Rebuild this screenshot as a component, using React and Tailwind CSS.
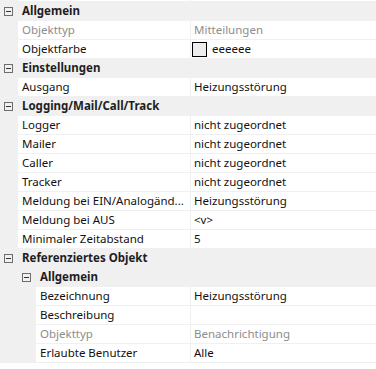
import React from "react";

const rows = [
    {type: "cat", level: 0, label: "Allgemein"},
    {type: "prop", level: 1, label: "Objekttyp", value: "Mitteilungen", readOnly: true},
    {type: "prop", level: 1, label: "Objektfarbe", value: "eeeeee", color: "#eeeeee"},
    {type: "cat", level: 0, label: "Einstellungen"},
    {type: "prop", level: 1, label: "Ausgang", value: "Heizungsstörung"},
    {type: "cat", level: 0, label: "Logging/Mail/Call/Track"},
    {type: "prop", level: 1, label: "Logger", value: "nicht zugeordnet"},
    {type: "prop", level: 1, label: "Mailer", value: "nicht zugeordnet"},
    {type: "prop", level: 1, label: "Caller", value: "nicht zugeordnet"},
    {type: "prop", level: 1, label: "Tracker", value: "nicht zugeordnet"},
    {type: "prop", level: 1, label: "Meldung bei EIN/Analogänd...", value: "Heizungsstörung"},
    {type: "prop", level: 1, label: "Meldung bei AUS", value: "<v>"},
    {type: "prop", level: 1, label: "Minimaler Zeitabstand", value: "5"},
    {type: "cat", level: 0, label: "Referenziertes Objekt"},
    {type: "cat", level: 1, label: "Allgemein"},
    {type: "prop", level: 2, label: "Bezeichnung", value: "Heizungsstörung"},
    {type: "prop", level: 2, label: "Beschreibung", value: ""},
    {type: "prop", level: 2, label: "Objekttyp", value: "Benachrichtigung", readOnly: true},
    {type: "prop", level: 2, label: "Erlaubte Benutzer", value: "Alle"},
];

const gutter = ["w-0", "w-[18px]", "w-[36px]"];
const catPad = ["pl-[4px]", "pl-[22px]"];

const MinusBox = () => (
    <span className="w-[9px] h-[9px] border border-[#6d6d6d] flex items-center justify-center shrink-0">
        <span className="w-[5px] h-px bg-[#333]" />
    </span>
);

const CategoryRow = ({row}) => (
    <div className={`h-[19px] flex items-start ${catPad[row.level]}`}>
        <div className="h-[18px] flex items-center">
            <MinusBox />
            <span className="ml-[9px] font-bold text-[#1e1e1e] leading-none">{row.label}</span>
        </div>
    </div>
);

const PropertyRow = ({row}) => (
    <div className="h-[19px] flex items-start">
        <div className={`${gutter[row.level]} shrink-0`} />
        <div
            className={`h-[18px] flex-1 bg-white flex items-center pl-[4px] whitespace-nowrap overflow-hidden ${
                row.readOnly ? "text-[#8d8d8d]" : "text-[#111]"
            }`}
        >
            {row.label}
        </div>
        <div
            className={`h-[18px] w-[185px] ml-px bg-white flex items-center whitespace-nowrap overflow-hidden ${
                row.readOnly ? "text-[#8d8d8d]" : "text-[#111]"
            } ${row.color ? "pl-px" : "pl-[3px]"}`}
        >
            {row.color && (
                <span
                    className="w-[15px] h-[15px] border border-black mr-[5px] shrink-0"
                    style={{backgroundColor: row.color}}
                />
            )}
            {row.value}
        </div>
    </div>
);

const App = () => {
    return (
        <div className="w-[376px] h-[369px] bg-white text-[11.5px]" style={{fontFamily: '"Noto Sans", sans-serif'}}>
            <div className="bg-[#f0f0f0]">
                {/* cut-off row above */}
                <div className="h-[2px] flex items-start">
                    <div className="w-[18px] shrink-0" />
                    <div className="h-px flex-1 bg-white" />
                    <div className="h-px w-[185px] ml-px bg-white" />
                </div>
                {rows.map((row, i) =>
                    row.type === "cat" ? <CategoryRow key={i} row={row} /> : <PropertyRow key={i} row={row} />
                )}
            </div>
        </div>
    );
};

export default App;
